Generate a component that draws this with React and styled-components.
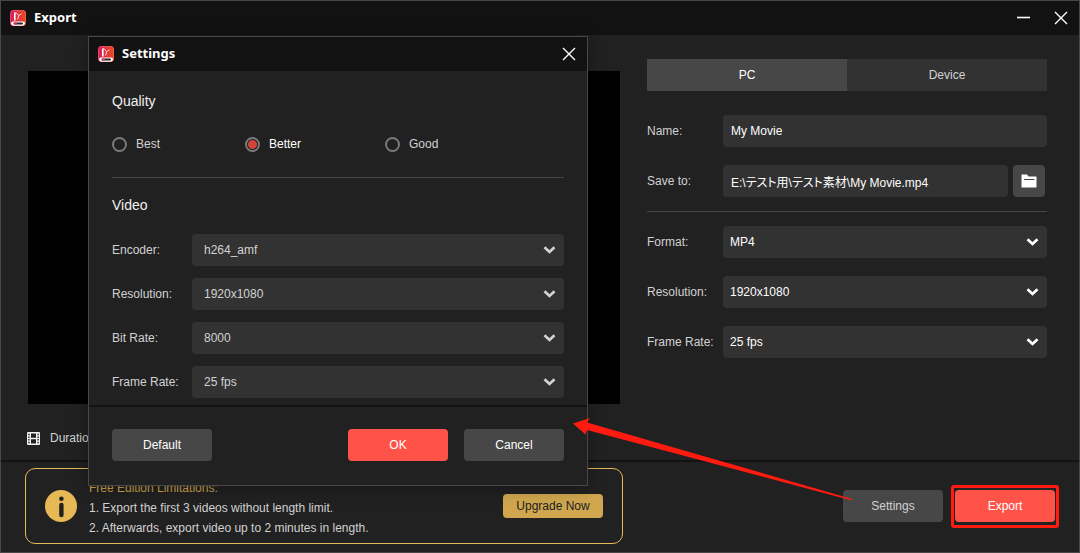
import React, { useState } from 'react';
import styled, { createGlobalStyle } from 'styled-components';

const GlobalStyle = createGlobalStyle`
    * {
        box-sizing: border-box;
    }
    body {
        margin: 0;
        background: #212121;
    }
    body, button, input, select {
        font-family: "Liberation Sans", Arial, "Noto Sans CJK JP", sans-serif;
        font-size: 12px;
    }
`;

const Window = styled.div`
    position: relative;
    display: flex;
    flex-direction: column;
    min-height: 100vh;
    border: 1px solid #474747;
    background: #212121;
    color: #d2d2d2;
`;

const TitleBar = styled.header`
    display: flex;
    align-items: center;
    height: 34px;
    padding: 0 11px 0 9px;
    background: #121212;
`;

const Title = styled.h1`
    flex: 1;
    margin: 0 0 2px 8px;
    color: #fff;
    font: bold 13px/18px "Noto Sans", "Open Sans", sans-serif;
`;

const IconButton = styled.button`
    display: flex;
    margin-left: 24px;
    padding: 0;
    border: none;
    background: none;
    cursor: pointer;
`;

const Content = styled.main`
    display: flex;
    flex: 1;
    gap: 27px;
    padding: 24px 32px 0 27px;
`;

const PreviewColumn = styled.section`
    display: flex;
    flex: 1;
    flex-direction: column;
    padding-top: 12px;
`;

const Preview = styled.div`
    flex: 1;
    min-height: 332px;
    background: #000;
`;

const Duration = styled.div`
    display: flex;
    align-items: center;
    gap: 10px;
    height: 56px;
    padding-bottom: 12px;
    padding-top: 24px;
    svg {
        margin-left: -1px;
    }
`;

const FormColumn = styled.section`
    width: 400px;
`;

const Tabs = styled.div`
    display: flex;
    margin-bottom: 24px;
`;

const Tab = styled.button`
    flex: 1;
    height: 32px;
    border: none;
    color: ${(props) => (props.$active ? '#fff' : '#d2d2d2')};
    background: ${(props) => (props.$active ? '#474747' : '#323232')};
    cursor: pointer;
`;

const Fields = styled.div`
    display: grid;
    gap: ${(props) => props.$gap};
`;

const VideoFields = styled(Fields)`
    padding-top: 19px;
`;

const Field = styled.div`
    display: grid;
    grid-template-columns: ${(props) => props.$label} 1fr;
    align-items: center;
`;

const TextInput = styled.input`
    flex: 1;
    width: 100%;
    min-width: 0;
    height: 32px;
    padding: 0 8px;
    border: none;
    border-radius: 4px;
    color: #fff;
    background: #323232;
    font-feature-settings: "palt"; /* Proportional kana */
`;

const PathPicker = styled.div`
    display: flex;
    gap: 5px;
    padding-right: 2px;
`;

const FolderButton = styled.button`
    display: flex;
    align-items: center;
    justify-content: center;
    width: 32px;
    height: 32px;
    padding: 0;
    border: none;
    border-radius: 4px;
    background: #474747;
    cursor: pointer;
`;

const Rule = styled.hr`
    height: 1px;
    margin: ${(props) => props.$margin};
    border: none;
    background: #474747;
`;

const SelectBox = styled.div`
    position: relative;
    color: ${(props) => (props.$dim ? '#d2d2d2' : '#fff')};
    select {
        display: block;
        width: 100%;
        height: 32px;
        padding: 0 ${(props) => (props.$dim ? '12px' : '7px')};
        border: none;
        border-radius: 4px;
        color: inherit;
        background: #323232;
        appearance: none;
    }
    svg {
        position: absolute;
        top: 12px;
        right: 8px;
        pointer-events: none;
    }
`;

const Footer = styled.footer`
    display: flex;
    align-items: center;
    height: 92px;
    padding: 0 20px 2px 24px;
    border-top: 2px solid #121212;
`;

const Notice = styled.aside`
    display: flex;
    align-items: center;
    flex: 0 1 598px;
    height: 76px;
    margin-right: auto;
    padding: 0 19px;
    border: 1px solid #e7b955;
    border-radius: 10px;
`;

const NoticeText = styled.div`
    flex: 1;
    padding-top: 4px;
    margin-left: 12px;
    line-height: 20px;
    p {
        margin: 0;
    }
    p:first-child {
        color: #cfa64e;
    }
`;

const Button = styled.button`
    width: 100px;
    height: 32px;
    padding: 0;
    border: none;
    border-radius: 4px;
    color: ${(props) => props.$color || '#fff'};
    background: ${(props) => (props.$primary ? '#ff5349' : '#474747')};
    cursor: pointer;
`;

const UpgradeButton = styled(Button)`
    height: 24px;
    color: #212121;
    background: #d0a74f;
`;

const Highlight = styled.div`
    margin-left: 8px;
    padding: 2px 1px 3px;
    border: 3px solid #ff1b10;
    border-radius: 3px;
    button {
        display: block;
    }
`;

const Dialog = styled.div`
    position: absolute;
    top: 35px;
    left: 87px;
    width: 500px;
    border: 1px solid #474747;
    background: #212121;
    box-shadow: 0 2px 16px rgba(0, 0, 0, 0.35);
`;

const DialogBody = styled.div`
    padding: 20px 23px 7px;
`;

const SectionTitle = styled.h2`
    margin: 0;
    color: #f0f0f0;
    font-size: 14px;
    font-weight: normal;
    line-height: 20px;
`;

const RadioGroup = styled.div`
    display: grid;
    grid-template-columns: 133px 140px 1fr;
    padding: 25px 0;
`;

const RadioLabel = styled.label`
    display: flex;
    align-items: center;
    gap: 9px;
    color: ${(props) => (props.$checked ? '#fff' : '#d2d2d2')};
    line-height: 16px;
    input {
        width: 15px;
        height: 15px;
        margin: 0;
        border: 2px solid #7a7a7a;
        border-radius: 50%;
        appearance: none;
    }
    input:checked {
        background: radial-gradient(circle, #d2423a 4px, #212121 5px);
    }
`;

const DialogFooter = styled.div`
    display: flex;
    gap: 16px;
    padding: 22px 23px 24px;
    border-top: 2px solid #121212;
    button:first-child {
        margin-right: auto;
    }
`;

const Pointer = styled.svg`
    position: absolute;
    top: 417px;
    left: 572px;
    pointer-events: none;
`;

const AppLogo = ({ id }) => (
    <svg width="16" height="16" viewBox="0 0 16 16" aria-hidden="true">
        <defs>
            <linearGradient id={id} x1="0" y1="0" x2="1" y2="0">
                <stop offset="0" stopColor="#d81b60" />
                <stop offset="1" stopColor="#ea4a1c" />
            </linearGradient>
        </defs>
        <rect width="16" height="16" rx="3.5" fill={`url(#${id})`} />
        <rect x="0.5" y="0.5" width="15" height="15" rx="3" fill="none" stroke="#f0838a" strokeOpacity="0.4" />
        <path d="M4 3 L5.6 1.8 V10.5 H4 Z" fill="#fff" />
        <path d="M5.8 2.4 L8.6 5.6 L11.5 3.8 M8.6 5.8 L7.6 9.5" fill="none" stroke="#ffd9dc" strokeWidth="1" />
        <path d="M1 13.4 Q1 11.6 3 11.6 H13 Q15 11.6 15 13.4 Q14.4 15.8 12 15.8 H4 Q1.6 15.8 1 13.4 Z" fill="#fff" />
        <rect x="3.5" y="12.4" width="9.5" height="2.2" rx="1" fill="#26262c" />
        <rect x="3.5" y="12.6" width="3.5" height="2" rx="1" fill="#e23a3a" />
    </svg>
);

const CloseIcon = () => (
    <svg width="14" height="14" viewBox="0 0 14 14">
        <path d="M1 1 L13 13 M13 1 L1 13" stroke="#fff" strokeWidth="1.4" />
    </svg>
);

const MinimizeIcon = () => (
    <svg width="14" height="14" viewBox="0 0 14 14">
        <path d="M1 6.5 H14" stroke="#fff" strokeWidth="1.6" />
    </svg>
);

const Chevron = () => (
    <svg width="13" height="8" viewBox="0 0 13 8" aria-hidden="true">
        <path d="M1.5 1.3 L6.5 6 L11.5 1.3" fill="none" stroke="currentColor" strokeWidth="2.7" />
    </svg>
);

const FilmIcon = () => (
    <svg width="13" height="13" viewBox="0 0 13 13" aria-hidden="true">
        <path d="M1 0 H12 Q13 0 13 1 V12 Q13 13 12 13 H1 Q0 13 0 12 V1 Q0 0 1 0 Z" fill="#f0f0f0" />
        <path d="M4 1.5 H9 V5.7 H4 Z M4 7.3 H9 V11.5 H4 Z" fill="#212121" />
        <path d="M1.2 1.7 H2.6 V3.2 H1.2 Z M1.2 4.4 H2.6 V5.9 H1.2 Z M1.2 7.1 H2.6 V8.6 H1.2 Z M1.2 9.8 H2.6 V11.3 H1.2 Z" fill="#212121" />
        <path d="M10.4 1.7 H11.8 V3.2 H10.4 Z M10.4 4.4 H11.8 V5.9 H10.4 Z M10.4 7.1 H11.8 V8.6 H10.4 Z M10.4 9.8 H11.8 V11.3 H10.4 Z" fill="#212121" />
    </svg>
);

const FolderIcon = () => (
    <svg width="16" height="14" viewBox="0 0 16 14">
        <path d="M0.5 1 Q0.5 0.5 1 0.5 H6 L7.5 2.5 H15 Q15.5 2.5 15.5 3 V13 Q15.5 13.5 15 13.5 H1 Q0.5 13.5 0.5 13 Z" fill="#fff" />
        <path d="M3 5.5 H13.5" stroke="#474747" strokeWidth="1" />
    </svg>
);

const InfoIcon = () => (
    <svg width="32" height="32" viewBox="0 0 32 32" aria-hidden="true">
        <circle cx="16" cy="16" r="16" fill="#e7b955" />
        <circle cx="16.4" cy="8.8" r="2.3" fill="#212121" />
        <path d="M16.4 15 V25" stroke="#212121" strokeWidth="4.4" strokeLinecap="round" />
    </svg>
);

const SelectField = ({ id, label, value, dim }) => (
    <Field $label={dim ? '80px' : '76px'}>
        <label htmlFor={id}>{label}</label>
        <SelectBox $dim={dim}>
            <select id={id} defaultValue={value}>
                <option>{value}</option>
            </select>
            <Chevron />
        </SelectBox>
    </Field>
);

const SettingsDialog = () => {
    const [quality, setQuality] = useState('Better');

    return (
        <Dialog role="dialog" aria-label="Settings">
            <TitleBar>
                <AppLogo id="dialogLogo" />
                <Title as="h2">Settings</Title>
                <IconButton aria-label="Close settings"><CloseIcon /></IconButton>
            </TitleBar>
            <DialogBody>
                <SectionTitle>Quality</SectionTitle>
                <RadioGroup>
                    {['Best', 'Better', 'Good'].map((option) => (
                        <RadioLabel key={option} $checked={quality === option}>
                            <input
                                type="radio"
                                name="quality"
                                checked={quality === option}
                                onChange={() => setQuality(option)}
                            />
                            {option}
                        </RadioLabel>
                    ))}
                </RadioGroup>
                <Rule $margin="0 0 17px" />
                <SectionTitle>Video</SectionTitle>
                <VideoFields $gap="12px">
                    <SelectField dim id="encoder" label="Encoder:" value="h264_amf" />
                    <SelectField dim id="videoResolution" label="Resolution:" value="1920x1080" />
                    <SelectField dim id="bitRate" label="Bit Rate:" value="8000" />
                    <SelectField dim id="videoFrameRate" label="Frame Rate:" value="25 fps" />
                </VideoFields>
            </DialogBody>
            <DialogFooter>
                <Button>Default</Button>
                <Button $primary>OK</Button>
                <Button>Cancel</Button>
            </DialogFooter>
        </Dialog>
    );
};

const App = () => {
    const [tab, setTab] = useState('PC');
    const [name, setName] = useState('My Movie');
    const [path, setPath] = useState('E:\\テスト用\\テスト素材\\My Movie.mp4');

    return (
        <>
            <GlobalStyle />
            <Window>
                <TitleBar>
                    <AppLogo id="windowLogo" />
                    <Title>Export</Title>
                    <IconButton aria-label="Minimize"><MinimizeIcon /></IconButton>
                    <IconButton aria-label="Close"><CloseIcon /></IconButton>
                </TitleBar>
                <Content>
                    <PreviewColumn>
                        <Preview />
                        <Duration>
                            <FilmIcon />
                            <span>Duration:</span>
                        </Duration>
                    </PreviewColumn>
                    <FormColumn>
                        <Tabs>
                            {['PC', 'Device'].map((item) => (
                                <Tab key={item} $active={tab === item} onClick={() => setTab(item)}>{item}</Tab>
                            ))}
                        </Tabs>
                        <Fields $gap="18px">
                            <Field $label="76px">
                                <label htmlFor="name">Name:</label>
                                <TextInput id="name" value={name} onChange={(e) => setName(e.target.value)} />
                            </Field>
                            <Field $label="76px">
                                <label htmlFor="path">Save to:</label>
                                <PathPicker>
                                    <TextInput id="path" value={path} onChange={(e) => setPath(e.target.value)} />
                                    <FolderButton aria-label="Browse"><FolderIcon /></FolderButton>
                                </PathPicker>
                            </Field>
                        </Fields>
                        <Rule $margin="14px 0" />
                        <Fields $gap="18px">
                            <SelectField id="format" label="Format:" value="MP4" />
                            <SelectField id="resolution" label="Resolution:" value="1920x1080" />
                            <SelectField id="frameRate" label="Frame Rate:" value="25 fps" />
                        </Fields>
                    </FormColumn>
                </Content>
                <Footer>
                    <Notice>
                        <InfoIcon />
                        <NoticeText>
                            <p>Free Edition Limitations:</p>
                            <p>1. Export the first 3 videos without length limit.</p>
                            <p>2. Afterwards, export video up to 2 minutes in length.</p>
                        </NoticeText>
                        <UpgradeButton>Upgrade Now</UpgradeButton>
                    </Notice>
                    <Button $color="#d2d2d2">Settings</Button>
                    <Highlight>
                        <Button $primary>Export</Button>
                    </Highlight>
                </Footer>
                <SettingsDialog />
                <Pointer width="280" height="83" viewBox="0 0 280 83" aria-hidden="true">
                    <path d="M0 5.5 L17 0 L14 4.5 L279 81 L279 82.5 L14 12 L12.5 16.5 Z" fill="#ff1b10" />
                </Pointer>
            </Window>
        </>
    );
};

export default App;
